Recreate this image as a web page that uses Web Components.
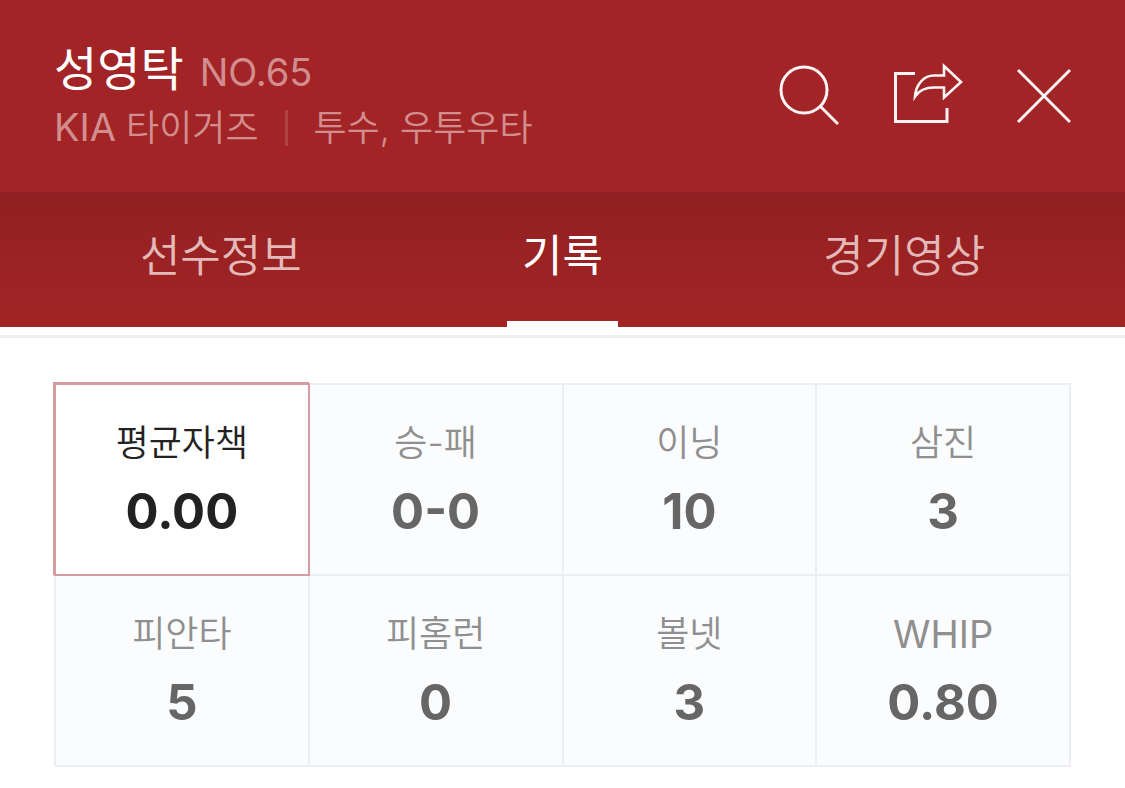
<!DOCTYPE html>
<html lang="ko">
<head>
<meta charset="utf-8">
<meta name="viewport" content="width=device-width, initial-scale=1">
<title>성영탁 - 기록</title>
<style>
    body {
        margin: 0;
        background: #fff;
        font-family: Inter, "Noto Sans CJK KR", sans-serif;
    }
</style>
</head>
<body>
<player-page></player-page>

<script>
customElements.define("icon-button", class extends HTMLElement {
    constructor() {
        super();
        this.attachShadow({ mode: "open" });
        this.shadowRoot.innerHTML = `
            <style>
                :host { display: block; }

                button {
                    display: block;
                    padding: 0;
                    border: 0;
                    background: none;
                    color: inherit;
                    cursor: pointer;
                }
            </style>
            <button type="button"><slot></slot></button>
        `;
    }

    connectedCallback() {
        this.shadowRoot.querySelector("button").setAttribute("aria-label", this.getAttribute("label"));
    }
});

customElements.define("player-header", class extends HTMLElement {
    constructor() {
        super();
        this.attachShadow({ mode: "open" });
        this.shadowRoot.innerHTML = `
            <style>
                :host {
                    display: flex;
                    justify-content: space-between;
                    align-items: flex-start;
                    padding: 36px 54px 38px;
                    background: #a22426;
                    color: #fff;
                }

                h1 {
                    display: flex;
                    align-items: baseline;
                    gap: 16px;
                    margin: 0;
                    font-size: 47px;
                    font-weight: 400;
                    line-height: 66px;
                }

                #number, #details { color: #d28e8f; }

                #number {
                    font-size: 38px;
                    line-height: 40px;
                }

                #details {
                    display: flex;
                    align-items: center;
                    font-size: 36px;
                    font-weight: 350;
                    line-height: 52px;
                }

                #divider {
                    width: 3px;
                    height: 36px;
                    margin: 0 26px;
                    background: #b04243;
                }

                #actions {
                    display: flex;
                    gap: 54px;
                    margin-top: 27px;
                }

                svg {
                    display: block;
                    fill: none;
                    stroke: #fcf4f4;
                    stroke-width: 3;
                }
            </style>
            <div>
                <h1><slot name="name"></slot><span id="number"><slot name="number"></slot></span></h1>
                <div id="details">
                    <slot name="team"></slot>
                    <div id="divider"></div>
                    <slot name="position"></slot>
                </div>
            </div>
            <div id="actions">
                <icon-button label="검색">
                    <svg width="60" height="62" viewBox="0 0 60 62">
                        <circle cx="25" cy="27" r="23" />
                        <path d="M41 43 59 61" />
                    </svg>
                </icon-button>
                <icon-button label="공유">
                    <svg width="70" height="62" viewBox="0 0 70 62">
                        <path d="M22 10.5H2.500V58.500H54V45" />
                        <path d="M51 3 68 19 51 34.500V24.500H41Q28 24.500 22 33.500C23 21 31 12.500 41 12.500H51Z" stroke-width="2.600" />
                    </svg>
                </icon-button>
                <icon-button label="닫기">
                    <svg width="54" height="62" viewBox="0 0 54 62">
                        <path d="M1 7 53 59M53 7 1 59" />
                    </svg>
                </icon-button>
            </div>
        `;
    }
});

customElements.define("player-tab", class extends HTMLElement {
    constructor() {
        super();
        this.attachShadow({ mode: "open" });
        this.shadowRoot.innerHTML = `
            <style>
                :host {
                    display: flex;
                    flex: 1;
                    justify-content: center;
                }

                button {
                    padding: 0 15px;
                    border: 0;
                    border-bottom: 6px solid transparent;
                    background: none;
                    color: #e3b9ba;
                    font-family: inherit;
                    font-size: 44px;
                    font-weight: 350;
                    line-height: 129px;
                    cursor: pointer;
                }

                :host([selected]) button {
                    border-color: #fff;
                    color: #fff;
                    font-weight: 400;
                }
            </style>
            <button type="button"><slot></slot></button>
        `;
    }
});

customElements.define("player-tabs", class extends HTMLElement {
    constructor() {
        super();
        this.attachShadow({ mode: "open" });
        this.shadowRoot.innerHTML = `
            <style>
                :host {
                    display: block;
                    padding-bottom: 8px;
                    border-bottom: 3px solid #eceef0;
                }

                nav {
                    display: flex;
                    padding: 0 50px;
                    background: linear-gradient(#8f2021, #992223 40%, #a22425);
                }
            </style>
            <nav><slot></slot></nav>
        `;
        this.addEventListener("click", event => {
            let tab = event.target.closest("player-tab");
            if (tab) {
                this.querySelectorAll("player-tab").forEach(other => other.toggleAttribute("selected", other === tab));
            }
        });
    }
});

customElements.define("stat-cell", class extends HTMLElement {
    constructor() {
        super();
        this.attachShadow({ mode: "open" });
        this.shadowRoot.innerHTML = `
            <style>
                :host {
                    display: block;
                    background: #fbfcfe;
                    color: #666;
                }

                button {
                    display: block;
                    width: 100%;
                    padding: 30px 0 21px;
                    border: 0;
                    background: none;
                    color: inherit;
                    font-family: inherit;
                    text-align: center;
                    cursor: pointer;
                }

                #label, #value { display: block; }

                #label {
                    color: #8f8f8f;
                    font-size: 36px;
                    font-weight: 350;
                    line-height: 56px;
                }

                :host([latin]) #label {
                    font-size: 38px;
                    font-weight: 400;
                }

                #value {
                    font-size: 49px;
                    font-weight: 700;
                    line-height: 82px;
                }

                :host([selected]) {
                    position: relative;
                    background: #fff;
                    box-shadow: 0 0 0 2px #d39da1, -1px -1px 0 2px #d39da1;
                    color: #222;
                }

                :host([selected]) #label {
                    color: #222;
                }
            </style>
            <button type="button">
                <span id="label"></span>
                <span id="value"><slot></slot></span>
            </button>
        `;
    }

    connectedCallback() {
        this.shadowRoot.querySelector("#label").textContent = this.getAttribute("label");
    }
});

customElements.define("stat-grid", class extends HTMLElement {
    constructor() {
        super();
        this.attachShadow({ mode: "open" });
        this.shadowRoot.innerHTML = `
            <style>
                :host {
                    display: grid;
                    grid-template-columns: repeat(4, 1fr);
                    gap: 2px;
                    margin: 45px 54px 21px;
                    padding: 2px;
                    background: #eceef1;
                }
            </style>
            <slot></slot>
        `;
        this.addEventListener("click", event => {
            let cell = event.target.closest("stat-cell");
            if (cell) {
                this.querySelectorAll("stat-cell").forEach(other => other.toggleAttribute("selected", other === cell));
            }
        });
    }
});

customElements.define("player-page", class extends HTMLElement {
    constructor() {
        super();
        this.attachShadow({ mode: "open" });
        this.shadowRoot.innerHTML = `
            <style>
                :host { display: block; }

                .latin {
                    font-size: 38px;
                    font-weight: 400;
                    line-height: 40px;
                }
            </style>
            <player-header>
                <span slot="name">성영탁</span>
                <span slot="number">NO.65</span>
                <span slot="team"><span class="latin">KIA</span> 타이거즈</span>
                <span slot="position">투수, 우투우타</span>
            </player-header>
            <player-tabs>
                <player-tab>선수정보</player-tab>
                <player-tab selected>기록</player-tab>
                <player-tab>경기영상</player-tab>
            </player-tabs>
            <stat-grid>
                <stat-cell label="평균자책" selected>0.00</stat-cell>
                <stat-cell label="승-패">0-0</stat-cell>
                <stat-cell label="이닝">10</stat-cell>
                <stat-cell label="삼진">3</stat-cell>
                <stat-cell label="피안타">5</stat-cell>
                <stat-cell label="피홈런">0</stat-cell>
                <stat-cell label="볼넷">3</stat-cell>
                <stat-cell label="WHIP" latin>0.80</stat-cell>
            </stat-grid>
        `;
    }
});
</script>
</body>
</html>
